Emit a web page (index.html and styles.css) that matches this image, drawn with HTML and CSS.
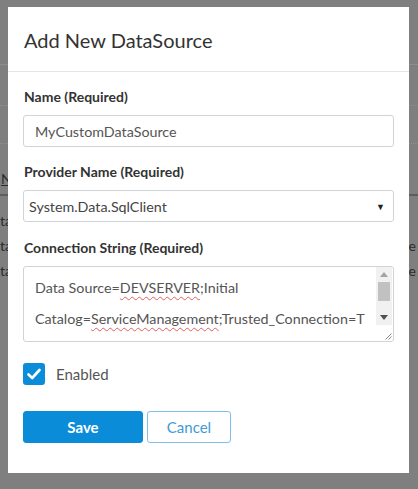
FILE: index.html
```html
<!DOCTYPE html>
<html>
<head>
<meta charset="utf-8">
<link rel="stylesheet" href="styles.css">
</head>
<body>
<div class="page">
  <div class="page-top"></div>
  <div class="page-dotted first"></div>
  <div class="page-dotted"></div>
  <div class="page-head"><span class="u">N</span></div>
  <div class="page-row"><span>ta</span><span></span></div>
  <div class="page-row"><span>ta</span><span>e</span></div>
  <div class="page-row"><span>ta</span><span>e</span></div>
</div>

<div class="modal">
  <div class="modal-header">
    <h1 class="modal-title">Add New DataSource</h1>
  </div>
  <div class="modal-body">
    <label class="field-label">Name (Required)</label>
    <div class="input">MyCustomDataSource</div>

    <label class="field-label">Provider Name (Required)</label>
    <div class="select">
      <span>System.Data.SqlClient</span>
      <span class="caret">&#9660;</span>
    </div>

    <label class="field-label">Connection String (Required)</label>
    <div class="textarea">
      <div class="ta-text">
        <div class="ta-line">Data Source=<span class="sp">DEVSERVER</span>;Initial</div>
        <div class="ta-line">Catalog=<span class="sp">ServiceManagement</span>;Trusted_Connection=T</div>
      </div>
      <div class="scrollbar">
        <div class="sb-btn"><svg width="8" height="5" viewBox="0 0 8 5"><path d="M0 5 L4 0 L8 5 Z" fill="#a3a3a3"/></svg></div>
        <div class="sb-thumb"></div>
        <div class="sb-track"></div>
        <div class="sb-btn"><svg width="8" height="5" viewBox="0 0 8 5"><path d="M0 0 L4 5 L8 0 Z" fill="#505050"/></svg></div>
        <div class="sb-corner"></div>
      </div>
      <svg class="grip" width="8" height="8" viewBox="0 0 8 8"><path d="M7.5 1.5 L1.5 7.5 M7.5 4.5 L4.5 7.5" stroke="#888" stroke-width="1"/></svg>
    </div>

    <div class="check-row">
      <span class="checkbox"><svg width="14" height="12" viewBox="0 0 14 12"><path d="M1.5 6.5 L5.2 10 L12.5 2" fill="none" stroke="#fff" stroke-width="2.6" stroke-linecap="round" stroke-linejoin="round"/></svg></span>
      <span class="check-label">Enabled</span>
    </div>

    <div class="actions">
      <button class="btn btn-primary">Save</button>
      <button class="btn btn-default">Cancel</button>
    </div>
  </div>
</div>
</body>
</html>
```

FILE: styles.css
```css
* { box-sizing: border-box; }
html, body { margin: 0; padding: 0; }
body {
  width: 418px;
  height: 489px;
  background: #7f7f7f;
  font-family: Lato, "Open Sans", sans-serif;
  overflow: hidden;
  position: relative;
}

/* dimmed page behind the dialog */
.page {
  color: #2b2b2b;
  font-size: 14px;
}
.page-top {
  height: 65px;
  border-bottom: 1px solid #8d8d8d;
}
.page-dotted {
  height: 38px;
  border-bottom: 1px dotted #8f8f8f;
}
.page-dotted.first { height: 41px; }
.page-head {
  height: 52px;
  padding-top: 28px;
  line-height: 14px;
  border-bottom: 2px solid #5e5e5e;
}
.page-head .u { text-decoration: underline; margin-left: 1px; }
.page-row {
  display: flex;
  justify-content: space-between;
  height: 25px;
  line-height: 25px;
  padding-right: 2px;
}
.page-row:nth-of-type(5) { margin-top: 12px; }

/* dialog */
.modal {
  position: absolute;
  left: 8px;
  top: 7px;
  width: 401px;
  height: 466px;
  background: #fff;
}
.modal-header {
  height: 65px;
  border-bottom: 1px solid #e3e6e8;
  padding: 21px 16px 0;
}
.modal-title {
  margin: 0;
  font-weight: 400;
  font-size: 20px;
  line-height: 24px;
  color: #333;
}
.modal-body {
  padding: 15px 15px 0;
  display: flex;
  flex-direction: column;
}
.field-label {
  display: block;
  font-weight: 700;
  font-size: 14px;
  line-height: 20px;
  color: #333;
  padding-left: 1px;
  margin-bottom: 8px;
}
.input, .select {
  height: 32px;
  border: 1px solid #cfd4d8;
  border-radius: 3px;
  font-size: 14.3px;
  color: #555;
  display: flex;
  align-items: center;
  margin-bottom: 15px;
}
.input { padding-left: 11px; }
.select {
  padding: 0 8px 0 5px;
  justify-content: space-between;
  color: #444;
  margin-bottom: 16px;
}
.caret { font-size: 9px; color: #222; }

.textarea {
  position: relative;
  height: 76px;
  border: 1px solid #cfd4d8;
  border-radius: 3px;
  display: flex;
  overflow: hidden;
}
.ta-text {
  flex: 1;
  overflow: hidden;
  padding: 5px 0 0 11px;
  font-size: 14.3px;
  line-height: 31px;
  color: #555;
  white-space: nowrap;
}
.sp {
  text-decoration: underline wavy #e06060;
  text-decoration-thickness: 1px;
  text-underline-offset: 3px;
}
.scrollbar {
  width: 16px;
  flex: none;
  display: flex;
  flex-direction: column;
  background: #f1f1f1;
  margin-right: 1px;
}
.sb-btn {
  height: 15px;
  display: flex;
  align-items: center;
  justify-content: center;
}
.sb-thumb {
  height: 19px;
  margin: 0 2px;
  background: #c1c1c1;
}
.sb-track { flex: 1; }
.sb-corner {
  height: 16px;
  background: #fff;
}
.grip {
  position: absolute;
  right: 1px;
  bottom: 1px;
}

.check-row {
  display: flex;
  align-items: center;
  margin-top: 21px;
  height: 22px;
}
.checkbox {
  width: 22px;
  height: 22px;
  border-radius: 3px;
  background: #0b8cd8;
  display: flex;
  align-items: center;
  justify-content: center;
}
.check-label {
  margin-left: 11px;
  font-size: 15px;
  color: #555;
}

.actions {
  display: flex;
  gap: 4px;
  margin-top: 26px;
}
.btn {
  height: 32px;
  border-radius: 3px;
  font-family: inherit;
  font-size: 15px;
  padding: 0;
}
.btn-primary {
  width: 120px;
  background: #0b8cd8;
  border: 1px solid #0b8cd8;
  color: #fff;
  font-weight: 700;
}
.btn-default {
  width: 84px;
  background: #fff;
  border: 1px solid #7fc0e8;
  color: #3f9bd6;
}
```
